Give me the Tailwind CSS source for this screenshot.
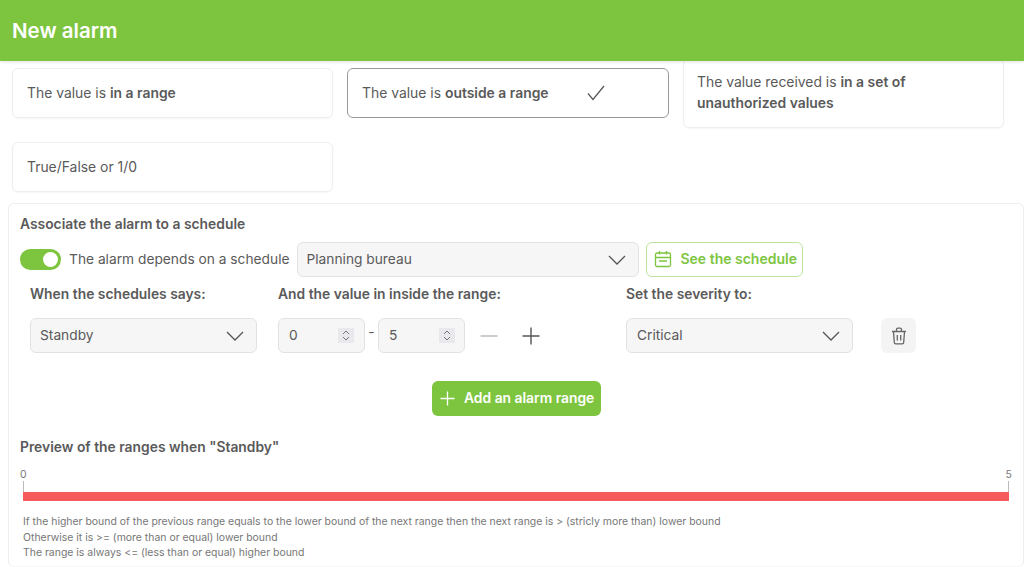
<!DOCTYPE html>
<html lang="en">
<head>
    <meta charset="UTF-8">
    <title>New alarm</title>
    <script src="https://cdn.jsdelivr.net/npm/@tailwindcss/browser@4"></script>
</head>
<body class="h-[567px] w-[1024px] overflow-hidden bg-white font-['Inter',sans-serif] text-[#5a5a5a]">
    <!-- header -->
    <div class="relative z-10 flex h-[61px] items-center bg-[#7ec53f] pl-3 pt-[1px] shadow-[0_1px_3px_rgba(0,0,0,0.12)]">
        <h1 class="text-[20.5px] font-semibold text-white">New alarm</h1>
    </div>

    <!-- alarm types -->
    <div class="-mt-[3px] grid grid-cols-[321px_322px_321px] items-center gap-x-[14px] gap-y-[14px] pl-3 text-[13.9px]">
        <div class="flex h-[50px] items-center rounded-md border border-[#eee] pl-[14px] shadow-[0_1px_2px_rgba(0,0,0,0.04)]">
            <span>The value is <b class="font-semibold">in a range</b></span>
        </div>
        <div class="flex h-[50px] items-center rounded-md border border-[#999] pl-[14px]">
            <span>The value is <b class="font-semibold">outside a range</b></span>
            <svg class="ml-[37px] h-[20px] w-[20px]" viewBox="0 0 20 20" fill="none" stroke="#555" stroke-width="1.2"><path d="M2 10.5l5 6L18 3"/></svg>
        </div>
        <div class="flex h-[70px] items-center rounded-md border border-[#eee] pl-[13px] pr-[60px] leading-[21px] shadow-[0_1px_2px_rgba(0,0,0,0.04)]">
            <span>The value received is <b class="font-semibold">in a set of unauthorized values</b></span>
        </div>
        <div class="flex h-[50px] items-center rounded-md border border-[#eee] pl-[14px] shadow-[0_1px_2px_rgba(0,0,0,0.04)]">
            <span>True/False or 1/0</span>
        </div>
    </div>

    <!-- schedule panel -->
    <div class="ml-2 mt-[11px] h-[364px] rounded-md border border-[#eee] border-b-[#f6f6f6] pl-[11px] pt-[11px] text-[13.75px]">
        <h2 class="text-[13.85px] font-semibold leading-[18px]">Associate the alarm to a schedule</h2>

        <div class="mt-[9px] flex items-center">
            <div class="flex h-[21px] w-[41px] items-center justify-end rounded-full bg-[#7ec53f] pr-[3px]">
                <div class="h-[15px] w-[15px] rounded-full bg-white"></div>
            </div>
            <span class="ml-[8px]">The alarm depends on a schedule</span>
            <div class="ml-[8px] flex h-[35px] w-[342px] items-center justify-between rounded-md border border-[#e2e2e2] bg-[#f6f6f6] pl-[8px] pr-[12px]">
                <span>Planning bureau</span>
                <svg class="h-[10px] w-[18px]" viewBox="0 0 18 10" fill="none" stroke="#555" stroke-width="1.3"><path d="M1 1l8 8 8-8"/></svg>
            </div>
            <div class="ml-[7px] flex h-[35px] w-[157px] items-center rounded-md border border-[#bfe49f] pb-[2px] pl-[7px] text-[14px] font-semibold text-[#7ec53f]">
                <svg class="mr-[8px] h-[18px] w-[18px]" viewBox="0 0 18 18" fill="none" stroke="#7ec53f" stroke-width="1.3"><rect x="1.5" y="3" width="15" height="13.5" rx="1.5"/><path d="M1.5 7.5h15M5.5 1v3.5M12.5 1v3.5M5 11h8"/></svg>
                See the schedule
            </div>
        </div>

        <div class="mt-[7px] flex pl-[10px] text-[13.85px] font-semibold leading-[20px]">
            <span class="w-[248px]">When the schedules says:</span>
            <span class="w-[348px]">And the value in inside the range:</span>
            <span>Set the severity to:</span>
        </div>

        <div class="mt-[14px] flex items-center pl-[10px]">
            <div class="flex h-[35px] w-[227px] items-center justify-between rounded-md border border-[#e2e2e2] bg-[#f6f6f6] pl-[9px] pr-[12px]">
                <span>Standby</span>
                <svg class="h-[10px] w-[18px]" viewBox="0 0 18 10" fill="none" stroke="#555" stroke-width="1.3"><path d="M1 1l8 8 8-8"/></svg>
            </div>
            <div class="ml-[21px] flex h-[35px] w-[87px] items-center justify-between rounded-md border border-[#e2e2e2] bg-[#f6f6f6] pl-[10px] pr-[10px]">
                <span>0</span>
                <div class="flex h-[15px] w-[16px] items-center justify-center bg-[#e9e9ed]">
                    <svg class="h-[11px] w-[8px]" viewBox="0 0 8 11" fill="none" stroke="#777" stroke-width="1"><path d="M1 4l3-3 3 3M1 7l3 3 3-3"/></svg>
                </div>
            </div>
            <span class="mx-[3px] -mt-[6px] w-[7px] text-center">-</span>
            <div class="flex h-[35px] w-[87px] items-center justify-between rounded-md border border-[#e2e2e2] bg-[#f6f6f6] pl-[10px] pr-[9px]">
                <span>5</span>
                <div class="flex h-[15px] w-[16px] items-center justify-center bg-[#e9e9ed]">
                    <svg class="h-[11px] w-[8px]" viewBox="0 0 8 11" fill="none" stroke="#777" stroke-width="1"><path d="M1 4l3-3 3 3M1 7l3 3 3-3"/></svg>
                </div>
            </div>
            <svg class="ml-[15px] h-[18px] w-[18px]" viewBox="0 0 18 18" fill="none" stroke="#aaa" stroke-width="1.2"><path d="M0.5 9h17"/></svg>
            <svg class="ml-[24px] h-[18px] w-[18px]" viewBox="0 0 18 18" fill="none" stroke="#555" stroke-width="1.4"><path d="M0.5 9h17M9 0.5v17"/></svg>
            <div class="ml-[86px] flex h-[35px] w-[227px] items-center justify-between rounded-md border border-[#e2e2e2] bg-[#f6f6f6] pl-[10px] pr-[12px]">
                <span>Critical</span>
                <svg class="h-[10px] w-[18px]" viewBox="0 0 18 10" fill="none" stroke="#555" stroke-width="1.3"><path d="M1 1l8 8 8-8"/></svg>
            </div>
            <div class="ml-[28px] flex h-[35px] w-[35px] items-center justify-center rounded-md bg-[#f4f4f4]">
                <svg class="h-[18px] w-[16px]" viewBox="0 0 16 18" fill="none" stroke="#666" stroke-width="1.3"><path d="M1 4.5h14M2.5 4.5l.8 11a1.5 1.5 0 0 0 1.5 1.4h6.4a1.5 1.5 0 0 0 1.5-1.4l.8-11M5.5 4.5V2.5a1.3 1.3 0 0 1 1.3-1.3h2.4a1.3 1.3 0 0 1 1.3 1.3v2M6.3 8v5.5M9.7 8v5.5"/></svg>
            </div>
        </div>

        <div class="mt-[28px] flex pl-[412px]">
            <div class="flex h-[35px] w-[169px] items-center rounded-md bg-[#7ec53f] pl-[8px] text-[13.85px] font-semibold text-white">
                <svg class="mr-[9px] h-[15px] w-[15px]" viewBox="0 0 15 15" fill="none" stroke="#fff" stroke-width="1.3"><path d="M0.5 7.5h14M7.5 0.5v14"/></svg>
                Add an alarm range
            </div>
        </div>

        <h2 class="mt-[22px] text-[13.85px] font-semibold leading-[18px]">Preview of the ranges when "Standby"</h2>

        <!-- range preview -->
        <div class="ml-[3px] mr-[14px] mt-[13px]">
            <div class="flex justify-between text-[10.5px] leading-[12px] text-[#777]">
                <span class="-ml-[3px]">0</span>
                <span class="-mr-[3px]">5</span>
            </div>
            <div class="flex h-[11px] justify-between">
                <div class="w-px bg-[#bbb]"></div>
                <div class="w-px bg-[#bbb]"></div>
            </div>
            <div class="h-[9px] bg-[#f55b5b]"></div>
        </div>

        <div class="mt-[13px] pl-[3px] text-[10.45px] leading-[15.5px] text-[#777]">
            <p>If the higher bound of the previous range equals to the lower bound of the next range then the next range is &gt; (stricly more than) lower bound</p>
            <p>Otherwise it is &gt;= (more than or equal) lower bound</p>
            <p>The range is always &lt;= (less than or equal) higher bound</p>
        </div>
    </div>
</body>
</html>
